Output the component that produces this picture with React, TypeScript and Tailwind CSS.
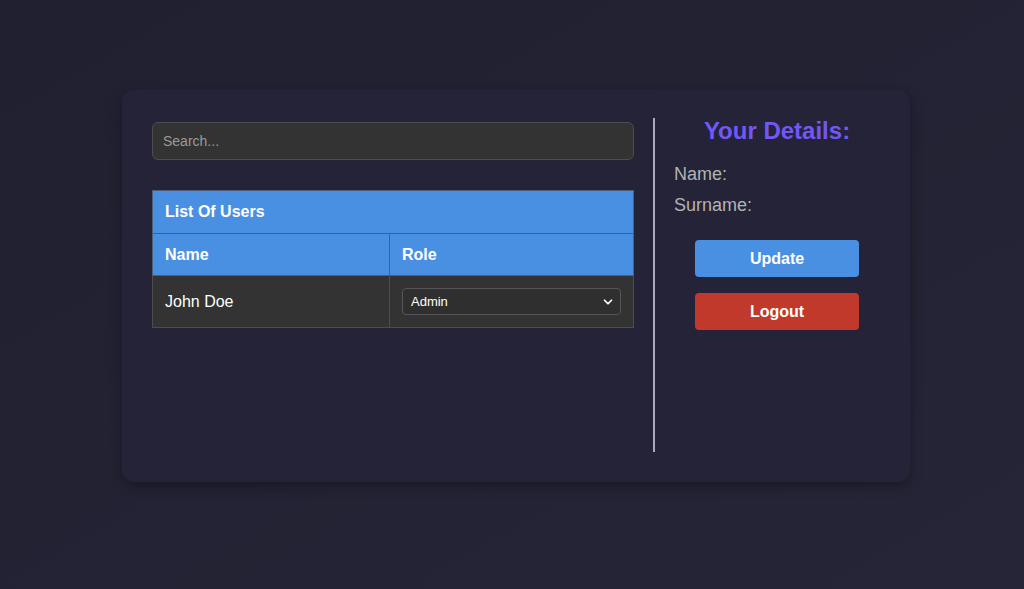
import { ChevronDown } from 'lucide-react'

const users = [{ name: 'John Doe', role: 'Admin' }]

export default function App() {
  return (
    <div className="min-h-screen w-full bg-gradient-to-br from-[#212030] to-[#262538] font-['Liberation_Sans',Arial,sans-serif] pt-[90px] pl-[122px]">
      <div className="w-[788px] h-[392px] rounded-xl bg-[#242337] shadow-[0_4px_12px_rgba(0,0,0,0.35)] p-[30px] flex">
        {/* users */}
        <div className="w-[482px] shrink-0 pt-[2px]">
          <input
            type="text"
            placeholder="Search..."
            className="w-full h-[38px] px-[10px] rounded-md bg-[#333333] border border-[#4d4d4d] text-sm text-white placeholder:text-[#9a9a9a] outline-none"
          />
          <table className="mt-[30px] w-full border-collapse border border-[#4d4d4d] text-white">
            <thead>
              <tr className="bg-[#4a90e2]">
                <th colSpan={2} className="h-[43px] px-3 text-left text-base font-bold border border-[#4d5d7a]">List Of Users</th>
              </tr>
              <tr className="bg-[#4a90e2]">
                <th className="w-[237px] h-[42px] px-3 text-left text-base font-bold border border-[#4d5d7a]">Name</th>
                <th className="h-[42px] px-3 text-left text-base font-bold border border-[#4d5d7a]">Role</th>
              </tr>
            </thead>
            <tbody>
              {users.map(u => (
                <tr key={u.name} className="bg-[#333333]">
                  <td className="h-[52px] px-3 text-base border border-[#4d4d4d]">{u.name}</td>
                  <td className="h-[52px] px-3 border border-[#4d4d4d]">
                    <div className="relative">
                      <select
                        defaultValue={u.role}
                        className="appearance-none w-full h-[27px] pl-2 pr-6 rounded bg-[#2f2f2f] border border-[#555555] text-[13px] text-white outline-none"
                      >
                        <option>Admin</option>
                        <option>User</option>
                      </select>
                      <ChevronDown size={14} strokeWidth={3} className="absolute right-[6px] top-[7px] text-white pointer-events-none" />
                    </div>
                  </td>
                </tr>
              ))}
            </tbody>
          </table>
        </div>

        <div className="ml-[19px] w-[2px] shrink-0 -mt-[2px] bg-[#a9a9b8]" />

        {/* details */}
        <div className="ml-[19px] flex-1">
          <h2 className="text-center text-2xl font-bold text-[#7357f6] leading-none -mt-[1px]">Your Details:</h2>
          <p className="mt-[16px] text-lg text-[#b3b3b3] leading-[31px]">Name:</p>
          <p className="text-lg text-[#b3b3b3] leading-[31px]">Surname:</p>
          <div className="mt-[19px] flex flex-col items-center gap-[16px]">
            <button className="w-[164px] h-[37px] rounded bg-[#4a90e2] text-base font-bold text-white">Update</button>
            <button className="w-[164px] h-[37px] rounded bg-[#c0392b] text-base font-bold text-white">Logout</button>
          </div>
        </div>
      </div>
    </div>
  )
}
